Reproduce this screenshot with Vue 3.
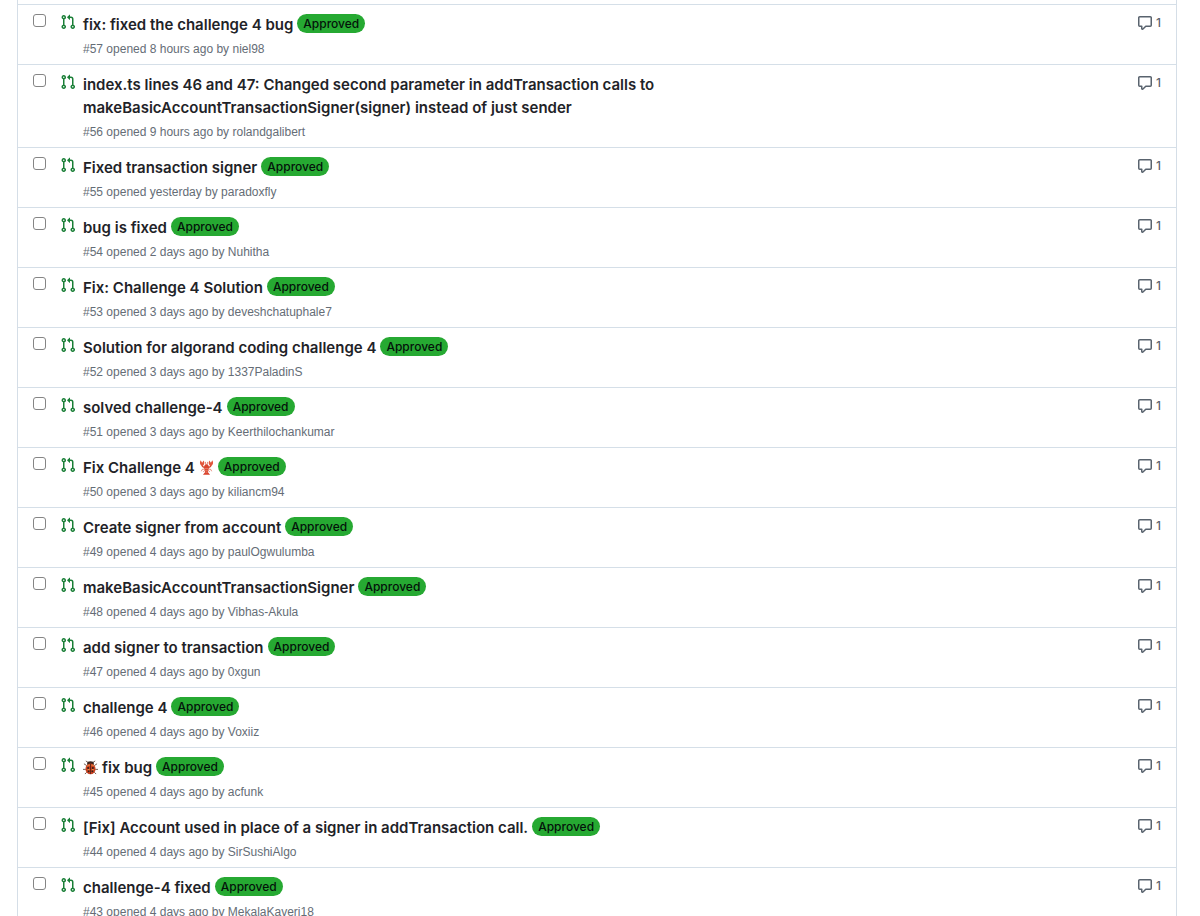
<template>
  <main class="page">
    <ul class="pr-list">
      <li v-for="pr in pulls" :key="pr.id" class="pr-row">
        <input
          :id="`pr-${pr.id}`"
          class="pr-check"
          type="checkbox"
          :aria-label="`Select pull request #${pr.id}`"
        />

        <svg class="pr-icon" viewBox="0 0 16 16" aria-hidden="true">
          <path
            d="M1.5 3.25a2.25 2.25 0 1 1 3 2.122v5.256a2.251 2.251 0 1 1-1.5 0V5.372A2.25 2.25 0 0 1 1.5 3.25Zm5.677-.177L9.573.677A.25.25 0 0 1 10 .854V2.5h1A2.5 2.5 0 0 1 13.5 5v5.628a2.251 2.251 0 1 1-1.5 0V5a1 1 0 0 0-1-1h-1v1.646a.25.25 0 0 1-.427.177L7.177 3.427a.25.25 0 0 1 0-.354ZM3.75 2.5a.75.75 0 1 0 0 1.5.75.75 0 0 0 0-1.5Zm0 9.5a.75.75 0 1 0 0 1.5.75.75 0 0 0 0-1.5Zm8.25.75a.75.75 0 1 0 1.5 0 .75.75 0 0 0-1.5 0Z"
          />
        </svg>

        <div class="pr-body">
          <div class="pr-heading">
            <svg v-if="pr.emoji === 'beetle'" class="emoji emoji--before" viewBox="0 0 16 16" role="img" aria-label="beetle">
              <g fill="none" stroke="#4a2d20" stroke-width=".8">
                <path d="M6 3 3 1M10 3l3-2M4 6 1 4M12 6l3-2M3 10H0M13 10h3M4 13l-2 2M12 13l2 2" />
              </g>
              <ellipse cx="8" cy="4" rx="3.6" ry="2.6" fill="#38251f" />
              <ellipse cx="8" cy="9.5" rx="5.4" ry="5.8" fill="#c8401f" />
              <path d="M8 4v11" stroke="#4a1c14" stroke-width=".8" />
              <g fill="#35201b">
                <circle cx="5.5" cy="8.5" r="1.1" />
                <circle cx="10.5" cy="8.5" r="1.1" />
                <circle cx="6" cy="12" r="1" />
                <circle cx="10" cy="12" r="1" />
              </g>
              <path d="M4.5 6.5c1-1 2-1 3-1M9 5.5c1 0 2 0 3 1M5 10.3h2M9.500 10.300h2" fill="none" stroke="#f2a04e" />
            </svg>
            <a class="pr-title" href="#">{{ pr.title }}</a>
            <svg v-if="pr.emoji === 'lobster'" class="emoji emoji--after" viewBox="0 0 16 16" role="img" aria-label="lobster">
              <path d="M7 7.5C4.5 8 3.3 7 3.3 5M9 7.5c2.500.5 3.700-.5 3.700-2.5" fill="none" stroke="#d3452c" stroke-width="1.6" />
              <path d="M3.3 6.500C.800 5.500.300 2.500 1.800.300L3.300 3 5 .500C6.300 3 5.800 5.500 3.300 6.500ZM12.700 6.500c2.500-1 3-4 1.500-6.200L12.700 3 11 .500C9.700 3 10.200 5.500 12.700 6.500Z" fill="#e2553b" />
              <path d="M7.3 5 6.8 2M8.700 5l.5-3M6.500 9.500l-3 .5-1 2M9.500 9.500l3 .5 1 2M6.500 11l-2 1.500M9.500 11l2 1.500" fill="none" stroke="#dd6651" stroke-width=".8" />
              <path d="M8 4.5c1.800 0 2.600 1.600 2.600 3.500L9.400 12.800l2.400 2.900H4.200l2.400-2.900L5.400 8c0-1.900.8-3.500 2.600-3.500Z" fill="#d9442e" />
              <path d="M6.300 9h3.400M6.600 11h2.800M7 13h2" stroke="#f2a08a" stroke-width=".6" />
            </svg>
            <a v-if="pr.approved" class="label" href="#">Approved</a>
          </div>
          <div class="pr-meta">
            #{{ pr.id }} opened {{ pr.when }} by <a class="pr-author" href="#">{{ pr.author }}</a>
          </div>
        </div>

        <a class="pr-comments" href="#" aria-label="1 comment">
          <svg class="comment-icon" viewBox="0 0 16 16" aria-hidden="true">
            <path
              d="M1 2.75C1 1.784 1.784 1 2.75 1h10.5c.966 0 1.75.784 1.75 1.75v7.5A1.75 1.75 0 0 1 13.25 12H9.06l-2.573 2.573A1.458 1.458 0 0 1 4 13.543V12H2.75A1.75 1.75 0 0 1 1 10.25Zm1.75-.25a.25.25 0 0 0-.25.25v7.5c0 .138.112.25.25.25h2a.75.75 0 0 1 .75.75v2.19l2.72-2.72a.749.749 0 0 1 .53-.22h4.5a.25.25 0 0 0 .25-.25v-7.5a.25.25 0 0 0-.25-.25Z"
            />
          </svg>
          <span>1</span>
        </a>
      </li>
    </ul>
  </main>
</template>

<script setup>
const pulls = [
  { id: 57, title: "fix: fixed the challenge 4 bug", when: "8 hours ago", author: "niel98", approved: true },
  {
    id: 56,
    title:
      "index.ts lines 46 and 47: Changed second parameter in addTransaction calls to makeBasicAccountTransactionSigner(signer) instead of just sender",
    when: "9 hours ago",
    author: "rolandgalibert",
    approved: false,
  },
  { id: 55, title: "Fixed transaction signer", when: "yesterday", author: "paradoxfly", approved: true },
  { id: 54, title: "bug is fixed", when: "2 days ago", author: "Nuhitha", approved: true },
  { id: 53, title: "Fix: Challenge 4 Solution", when: "3 days ago", author: "deveshchatuphale7", approved: true },
  { id: 52, title: "Solution for algorand coding challenge 4", when: "3 days ago", author: "1337PaladinS", approved: true },
  { id: 51, title: "solved challenge-4", when: "3 days ago", author: "Keerthilochankumar", approved: true },
  { id: 50, title: "Fix Challenge 4", emoji: "lobster", when: "3 days ago", author: "kiliancm94", approved: true },
  { id: 49, title: "Create signer from account", when: "4 days ago", author: "paulOgwulumba", approved: true },
  { id: 48, title: "makeBasicAccountTransactionSigner", when: "4 days ago", author: "Vibhas-Akula", approved: true },
  { id: 47, title: "add signer to transaction", when: "4 days ago", author: "0xgun", approved: true },
  { id: 46, title: "challenge 4", when: "4 days ago", author: "Voxiiz", approved: true },
  { id: 45, title: "fix bug", emoji: "beetle", when: "4 days ago", author: "acfunk", approved: true },
  { id: 44, title: "[Fix] Account used in place of a signer in addTransaction call.", when: "4 days ago", author: "SirSushiAlgo", approved: true },
  { id: 43, title: "challenge-4 fixed", when: "4 days ago", author: "MekalaKaveri18", approved: true },
];
</script>

<style>
body {
  margin: 0;
  background: #fff;
}
</style>

<style scoped>
.page {
  padding: 0 23px 0 17px;
  font-family: Inter, "Liberation Sans", sans-serif;
  color: #1f2328;
}

.pr-list {
  list-style: none;
  margin: 0;
  padding: 4px 0 0;
  border: 1px solid #d5dee7;
  border-width: 0 1px;
}

.pr-row {
  display: flex;
  align-items: flex-start;
  border-top: 1px solid #d5dfe8;
  padding: 8px 15px 6px;
}

.pr-check {
  appearance: none;
  box-sizing: border-box;
  flex: none;
  width: 13px;
  height: 13px;
  margin: 1px 0 0;
  border: 1px solid #858585;
  border-radius: 3px;
  background: #fff;
}

.pr-check:checked {
  background: #0969da;
}

.pr-icon {
  flex: none;
  width: 16px;
  height: 16px;
  margin: 1px 7px 0 14px;
  fill: #1a7f37;
}

.pr-body {
  width: 61%;
}

.pr-heading {
  font-size: 15px;
  font-weight: 600;
  line-height: 23px;
}

.pr-title {
  color: inherit;
  text-decoration: none;
}

.emoji {
  width: 15px;
  height: 15px;
  vertical-align: -2px;
}

.emoji--before {
  margin-right: 4px;
}

.emoji--after {
  margin-left: 4px;
}

.label {
  display: inline-block;
  margin-left: 4px;
  padding: 0 6px;
  border-radius: 10px;
  background: #26a932;
  color: #04120a;
  font-size: 12px;
  font-weight: 500;
  line-height: 19px;
  vertical-align: 2px;
  text-decoration: none;
}

.pr-meta {
  margin-top: 4px;
  color: #656d76;
  font-family: "Liberation Sans", Arial, sans-serif;
  font-size: 12px;
  line-height: 18px;
}

.pr-author {
  color: inherit;
  text-decoration: none;
}

.pr-comments {
  display: flex;
  align-items: center;
  gap: 3px;
  margin-left: auto;
  padding-top: 1px;
  color: #59636e;
  font-size: 12px;
  font-weight: 500;
  line-height: 18px;
  text-decoration: none;
}

.comment-icon {
  width: 16px;
  height: 16px;
  fill: currentColor;
}
</style>
